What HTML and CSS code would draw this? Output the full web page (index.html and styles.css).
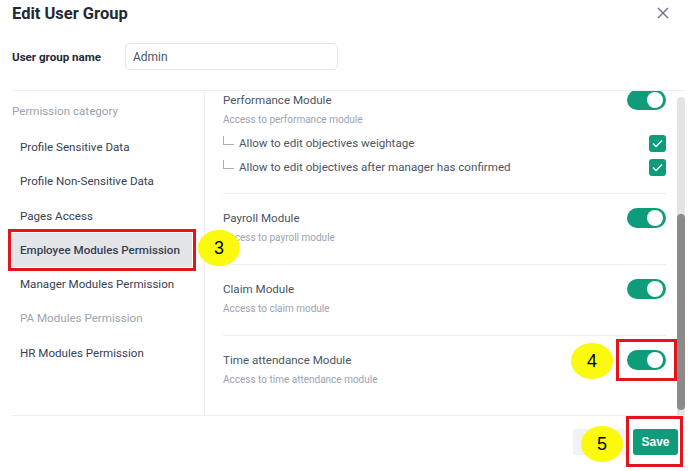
FILE: index.html
```html
<!DOCTYPE html>
<html lang="en">
<head>
    <meta charset="UTF-8">
    <title>Edit User Group</title>
    <link rel="stylesheet" href="styles.css">
</head>
<body>
    <div class="modal">
        <div class="modal-header">
            <h2 class="modal-title">Edit User Group</h2>
            <span class="close-btn">
                <svg width="12" height="12" viewBox="0 0 12 12"><path d="M1 1L11 11M11 1L1 11" stroke="#6b7280" stroke-width="1.4" fill="none"/></svg>
            </span>
        </div>

        <div class="form-row">
            <label class="form-label">User group name</label>
            <div class="text-input">Admin</div>
        </div>

        <div class="modal-body">
            <div class="category-list">
                <div class="category-heading">Permission category</div>
                <div class="category-item">Profile Sensitive Data</div>
                <div class="category-item">Profile Non-Sensitive Data</div>
                <div class="category-item">Pages Access</div>
                <div class="category-item active">
                    Employee Modules Permission
                    <span class="step-badge step-3">3</span>
                </div>
                <div class="category-item">Manager Modules Permission</div>
                <div class="category-item muted">PA Modules Permission</div>
                <div class="category-item">HR Modules Permission</div>
            </div>

            <div class="module-pane">
                <div class="module-list">
                    <div class="module-row with-subs">
                        <div class="module-head">
                            <span class="module-title">Performance Module</span>
                            <span class="toggle"></span>
                        </div>
                        <div class="module-desc">Access to performance module</div>
                        <div class="sub-options">
                            <div class="sub-option">
                                <span class="branch"></span>
                                <span class="sub-label">Allow to edit objectives weightage</span>
                                <span class="checkbox"><svg width="11" height="9" viewBox="0 0 11 9"><path d="M1 4.5L4 7.5L10 1.5" stroke="#fff" stroke-width="1.3" fill="none"/></svg></span>
                            </div>
                            <div class="sub-option">
                                <span class="branch"></span>
                                <span class="sub-label">Allow to edit objectives after manager has confirmed</span>
                                <span class="checkbox"><svg width="11" height="9" viewBox="0 0 11 9"><path d="M1 4.5L4 7.5L10 1.5" stroke="#fff" stroke-width="1.3" fill="none"/></svg></span>
                            </div>
                        </div>
                    </div>
                    <div class="module-row">
                        <div class="module-head">
                            <span class="module-title">Payroll Module</span>
                            <span class="toggle"></span>
                        </div>
                        <div class="module-desc">Access to payroll module</div>
                    </div>
                    <div class="module-row">
                        <div class="module-head">
                            <span class="module-title">Claim Module</span>
                            <span class="toggle"></span>
                        </div>
                        <div class="module-desc">Access to claim module</div>
                    </div>
                    <div class="module-row">
                        <div class="module-head">
                            <span class="module-title">Time attendance Module</span>
                            <span class="mark-wrap">
                                <span class="toggle"></span>
                                <span class="step-badge step-4">4</span>
                            </span>
                        </div>
                        <div class="module-desc">Access to time attendance module</div>
                    </div>
                </div>
                <div class="scrollbar">
                    <div class="scroll-thumb"></div>
                </div>
            </div>
        </div>

        <div class="modal-footer">
            <button class="cancel-btn" aria-label="Cancel"></button>
            <button class="save-btn">Save</button>
            <span class="step-badge step-5">5</span>
            <span class="mark-box"></span>
        </div>
    </div>
</body>
</html>
```

FILE: styles.css
```css
* {
    margin: 0;
    padding: 0;
    box-sizing: border-box;
    font-family: 'Roboto', 'Liberation Sans', sans-serif;
}

:root {
    --green: #0e9c7b;
    --text: #1f2937;
    --body: #374151;
    --muted: #9ca3af;
    --line: #e5e7eb;
}

body {
    background: #fff;
    color: var(--body);
}

.modal {
    width: 688px;
    height: 471px;
    padding: 0 3px 0 12px;
    position: relative;
}

.modal-header {
    display: flex;
    justify-content: space-between;
    align-items: center;
    height: 27px;
    padding-right: 16px;
}

.modal-title {
    font-size: 16.5px;
    font-weight: 700;
    color: var(--text);
    line-height: 27px;
}

.close-btn {
    display: flex;
    margin-top: -1px;
}

.form-row {
    display: flex;
    align-items: center;
    margin-top: 16px;
    height: 27px;
}

.form-label {
    width: 113px;
    font-size: 11.6px;
    font-weight: 700;
    color: var(--text);
}

.text-input {
    width: 213px;
    height: 27px;
    border: 1px solid var(--line);
    border-radius: 5px;
    padding: 0 7px;
    line-height: 26px;
    font-size: 12px;
    color: #4b5563;
}

.modal-body {
    display: flex;
    margin-top: 20px;
    height: 326px;
    border-top: 1px solid #eceef1;
    border-bottom: 1px solid #eceef1;
}

.category-list {
    width: 193px;
    border-right: 1px solid #eceef1;
    padding: 10px 12px 0 0;
}

.category-heading {
    font-size: 11.6px;
    color: var(--muted);
    line-height: 20px;
    margin-bottom: 9px;
}

.category-item {
    position: relative;
    height: 34.3px;
    line-height: 34.3px;
    padding-left: 8px;
    font-size: 11.6px;
    color: var(--body);
    white-space: nowrap;
}

.category-item.active {
    background: #e3e5e9;
    font-weight: 500;
    outline: 3px solid #e3141b;
    outline-offset: 1px;
}

.category-item.muted {
    color: var(--muted);
}

.step-badge {
    position: absolute;
    width: 42px;
    height: 36px;
    border-radius: 50%;
    background: #fbf90c;
    color: #000;
    font-family: 'Liberation Sans', Arial, sans-serif;
    font-size: 18px;
    font-weight: 400;
    line-height: 36px;
    text-align: center;
}

.step-3 {
    left: 186px;
    top: -3px;
}

.module-pane {
    flex: 1;
    display: flex;
    overflow: hidden;
}

.module-list {
    flex: 1;
    margin-top: -15px;
    padding: 0 11px 0 18px;
}

.module-row {
    padding: 14px 0 18px;
    border-bottom: 1px solid #eceef1;
}

.module-row.with-subs {
    padding-bottom: 14px;
}

.module-row:last-child {
    border-bottom: none;
}

.module-head {
    display: flex;
    justify-content: space-between;
    align-items: center;
    height: 20px;
}

.module-title {
    font-size: 11.6px;
    color: #4b5563;
}

.module-desc {
    margin-top: 2px;
    font-size: 10px;
    line-height: 16px;
    color: var(--muted);
}

.toggle {
    position: relative;
    display: block;
    width: 39px;
    height: 20px;
    border-radius: 10px;
    background: var(--green);
}

.toggle::after {
    content: '';
    position: absolute;
    right: 3px;
    top: 2px;
    width: 16px;
    height: 16px;
    border-radius: 50%;
    background: #fff;
}

.mark-wrap {
    position: relative;
    display: flex;
    outline: 3px solid #e3141b;
    outline-offset: 8px;
}

.step-4 {
    left: -56px;
    top: -7px;
}

.sub-options {
    margin-top: 3px;
}

.sub-option {
    display: flex;
    align-items: center;
    height: 24px;
}

.branch {
    width: 11px;
    height: 9px;
    margin: -6px 5px 0 0;
    border-left: 1px solid #aab0b9;
    border-bottom: 1px solid #aab0b9;
}

.sub-label {
    flex: 1;
    font-size: 11.6px;
    color: #4b5563;
}

.checkbox {
    width: 17px;
    height: 17px;
    border-radius: 3px;
    background: var(--green);
    display: flex;
    align-items: center;
    justify-content: center;
}

.scrollbar {
    width: 8px;
    margin: 6px 0 0 0;
    background: #e4e4e4;
    border-radius: 4px 4px 0 0;
    display: flex;
    flex-direction: column;
    justify-content: flex-end;
}

.scroll-thumb {
    height: 196px;
    margin-bottom: 5px;
    background: #8a8a8a;
    border-radius: 4px;
}

.modal-footer {
    position: relative;
    display: flex;
    justify-content: flex-end;
    gap: 3px;
    padding: 13px 7px 0 0;
}

.cancel-btn,
.save-btn {
    height: 26px;
    border: none;
    border-radius: 3px;
    font-size: 12px;
}

.cancel-btn {
    width: 57px;
    background: #f1f2f5;
}

.save-btn {
    width: 45px;
    background: var(--green);
    color: #fff;
    font-family: 'Liberation Sans', Arial, sans-serif;
    font-weight: 700;
}

.step-5 {
    left: 569px;
    top: 10px;
}

.mark-box {
    position: absolute;
    left: 614px;
    top: 0;
    width: 57px;
    height: 51px;
    border: 3px solid #e3141b;
}
```
